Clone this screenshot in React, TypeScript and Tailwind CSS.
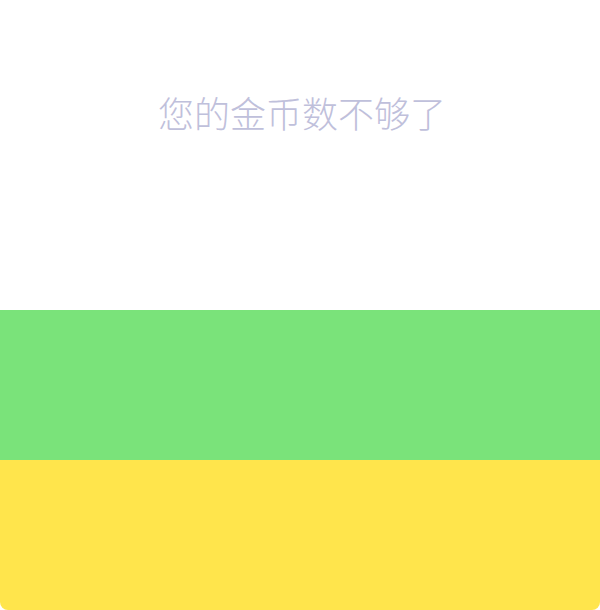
export default function App() {
  return (
    <div className="w-[600px] h-[610px] bg-white rounded-lg overflow-hidden flex flex-col font-['Noto_Sans_CJK_SC',sans-serif]">
      {/* Message */}
      <div className="h-[310px] flex justify-center pt-[87px] pl-[4px]">
        <p className="text-[36px] leading-[50px] font-light text-[#bfc0db]">您的金币数不够了</p>
      </div>

      {/* Actions */}
      <button className="h-[150px] bg-[#7ae37a]" />
      <button className="h-[150px] bg-[#ffe54c]" />
    </div>
  );
}
